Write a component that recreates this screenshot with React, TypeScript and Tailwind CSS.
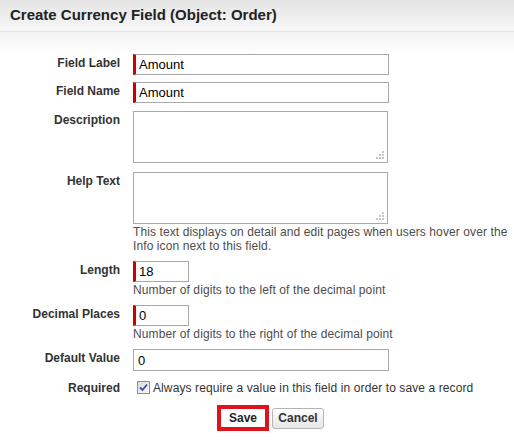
import { useState } from "react"

const font = { fontFamily: '"Liberation Sans", Arial, sans-serif' }

function Label({ children }: { children: React.ReactNode }) {
  return (
    <div className="w-[120px] shrink-0 pt-[2px] text-right text-[12px] font-bold leading-[14px] text-[#333]">
      {children}
    </div>
  )
}

function Grip() {
  return (
    <svg className="absolute bottom-[2px] right-[2px]" width="10" height="10" viewBox="0 0 10 10">
      <g fill="#c8c8c8">
        <rect x="7" y="1" width="2" height="2" />
        <rect x="4" y="4" width="2" height="2" />
        <rect x="7" y="4" width="2" height="2" />
        <rect x="1" y="7" width="2" height="2" />
        <rect x="4" y="7" width="2" height="2" />
        <rect x="7" y="7" width="2" height="2" />
      </g>
    </svg>
  )
}

export default function App() {
  const [label, setLabel] = useState("Amount")
  const [name, setName] = useState("Amount")
  const [length, setLength] = useState("18")
  const [decimals, setDecimals] = useState("0")
  const [defaultValue, setDefaultValue] = useState("0")
  const [required, setRequired] = useState(true)

  const inputBase =
    "block h-[21px] border border-[#a9a9a9] bg-white px-[4px] text-[13px] text-black outline-none"
  const requiredInput = "border-l-[3px] border-l-[#c00] pl-[3px]"
  const hint = "mt-[1px] text-[12px] leading-[14px] tracking-[0.1px] text-[#4d4d4d]"

  return (
    <div className="h-[441px] w-[514px] overflow-hidden bg-white" style={font}>
      {/* Header */}
      <div className="flex h-[32px] items-center border-b border-[#e2e2e2] bg-gradient-to-b from-[#e4e4e4] to-[#f7f7f7] pl-[10px]">
        <h1 className="text-[15px] font-bold text-[#222]">Create Currency Field (Object: Order)</h1>
      </div>

      {/* Form */}
      <div className="bg-[linear-gradient(#f3f3f3,#ffffff_22px)] pt-[22px]">
        <div className="flex">
          <Label>Field Label</Label>
          <input
            value={label}
            onChange={(e) => setLabel(e.target.value)}
            className={`ml-[13px] w-[256px] ${inputBase} ${requiredInput}`}
          />
        </div>

        <div className="mt-[7px] flex">
          <Label>Field Name</Label>
          <input
            value={name}
            onChange={(e) => setName(e.target.value)}
            className={`ml-[13px] w-[256px] ${inputBase} ${requiredInput}`}
          />
        </div>

        <div className="mt-[8px] flex">
          <Label>Description</Label>
          <div className="relative ml-[13px] h-[52px] w-[255px] border border-[#a9a9a9] bg-white">
            <Grip />
          </div>
        </div>

        <div className="mt-[9px] flex">
          <Label>Help Text</Label>
          <div className="ml-[13px]">
            <div className="relative h-[52px] w-[255px] border border-[#a9a9a9] bg-white">
              <Grip />
            </div>
            <p className={`w-[381px] ${hint}`}>
              This text displays on detail and edit pages when users hover over the Info icon next to this field.
            </p>
          </div>
        </div>

        <div className="mt-[8px] flex">
          <Label>Length</Label>
          <div className="ml-[13px]">
            <input
              value={length}
              onChange={(e) => setLength(e.target.value)}
              className={`w-[56px] ${inputBase} ${requiredInput}`}
            />
            <p className={hint}>Number of digits to the left of the decimal point</p>
          </div>
        </div>

        <div className="mt-[8px] flex">
          <Label>Decimal Places</Label>
          <div className="ml-[13px]">
            <input
              value={decimals}
              onChange={(e) => setDecimals(e.target.value)}
              className={`w-[56px] ${inputBase} ${requiredInput}`}
            />
            <p className={hint}>Number of digits to the right of the decimal point</p>
          </div>
        </div>

        <div className="mt-[8px] flex">
          <Label>Default Value</Label>
          <input
            value={defaultValue}
            onChange={(e) => setDefaultValue(e.target.value)}
            className={`ml-[13px] h-[22px] w-[256px] ${inputBase}`}
          />
        </div>

        <div className="mt-[8px] flex">
          <Label>Required</Label>
          <label className="ml-[17px] mt-[1px] flex cursor-pointer items-center">
            <span
              onClick={() => setRequired(!required)}
              className="flex h-[13px] w-[13px] items-center justify-center border border-[#8e8f8f] bg-gradient-to-br from-[#dcdcdc] to-[#f6f6f6]"
            >
              {required && (
                <svg width="9" height="9" viewBox="0 0 9 9">
                  <path d="M1 4.5 L3.5 7 L8 1.5" fill="none" stroke="#3a4f9c" strokeWidth="1.8" />
                </svg>
              )}
            </span>
            <span className="ml-[3px] text-[12px] leading-[14px] tracking-[0.1px] text-[#333]">
              Always require a value in this field in order to save a record
            </span>
          </label>
        </div>

        {/* Buttons */}
        <div className="mt-[10px] flex items-center pl-[217px]">
          <div className="border-[4px] border-[#e0131d]">
            <button className="block h-[18px] w-[44px] bg-white text-[12px] font-bold text-[#222]">Save</button>
          </div>
          <button className="ml-[3px] h-[21px] w-[52px] rounded-[3px] border border-[#b5b5b5] bg-gradient-to-b from-white to-[#e6e6e6] text-[12px] font-bold text-[#333]">
            Cancel
          </button>
        </div>
      </div>
    </div>
  )
}
